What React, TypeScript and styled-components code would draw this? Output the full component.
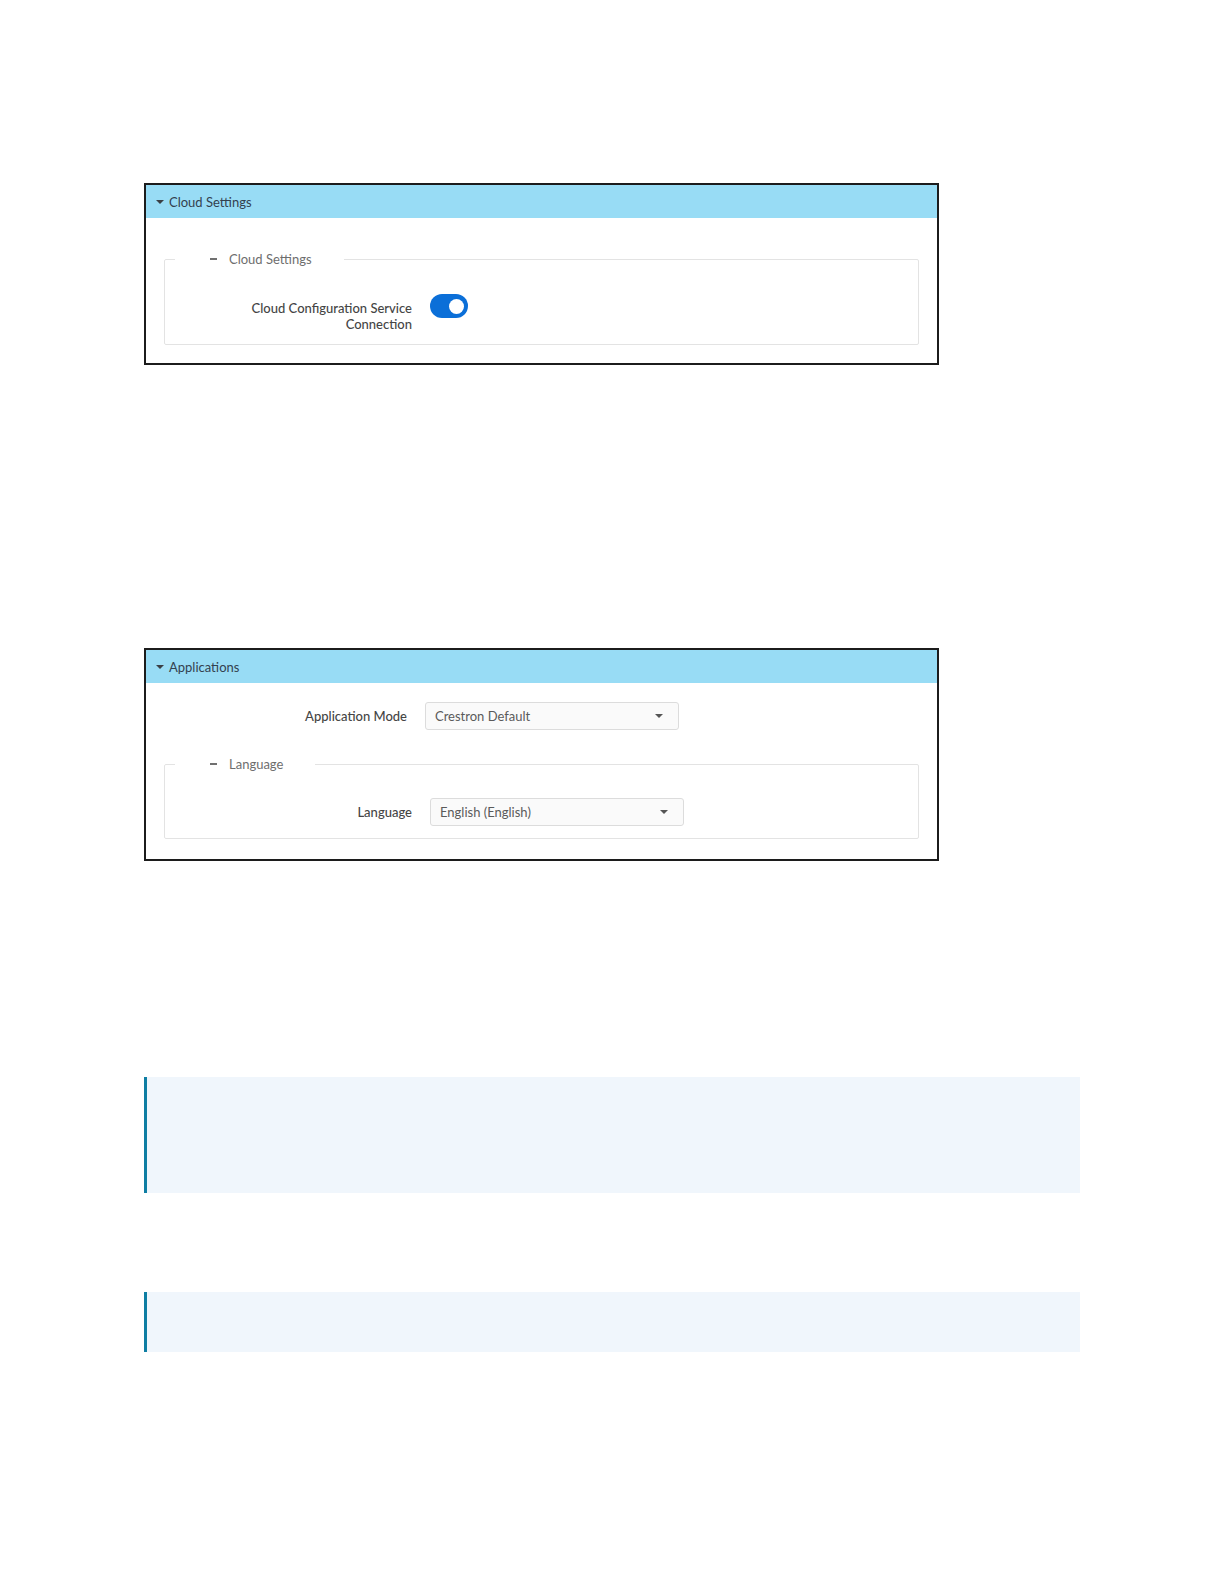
import React from "react";
import styled, { createGlobalStyle } from "styled-components";

const GlobalStyle = createGlobalStyle`
  html, body {
    margin: 0;
    padding: 0;
    background: #ffffff;
  }
  body {
    font-family: Lato, "Open Sans", "Liberation Sans", sans-serif;
    -webkit-font-smoothing: antialiased;
  }
  * { box-sizing: border-box; }
`;

const Page = styled.div`
  display: flex;
  flex-direction: column;
  align-items: flex-start;
  padding: 183px 0 0 144px;
  min-height: 1584px;
`;

const Panel = styled.section<{ $mt?: number }>`
  width: 795px;
  border: 2px solid #1c1c1c;
  background: #ffffff;
  margin-top: ${(p) => p.$mt ?? 0}px;
  display: flex;
  flex-direction: column;
`;

const PanelHeader = styled.div`
  height: 33px;
  background: #98dcf5;
  display: flex;
  align-items: center;
  padding-left: 10px;
  font-size: 13px;
  color: #33414f;
  gap: 5px;
`;

const Caret = styled.span`
  width: 0;
  height: 0;
  border-left: 4px solid transparent;
  border-right: 4px solid transparent;
  border-top: 4.5px solid #3a3f45;
`;

const PanelBody = styled.div<{ $pt: number; $pb: number }>`
  padding: ${(p) => p.$pt}px 0 ${(p) => p.$pb}px;
  display: flex;
  flex-direction: column;
`;

const Group = styled.fieldset<{ $mt?: number; $pt: number }>`
  margin: ${(p) => p.$mt ?? 0}px 18px 0 18px;
  padding: ${(p) => p.$pt}px 0 12px;
  border: 1px solid #e3e3e3;
  border-radius: 2px;
  min-width: 0;
`;

const Legend = styled.legend`
  margin-left: 10px;
  padding: 0 32px 0 35px;
  height: 16px;
  line-height: 16px;
  font-size: 13px;
  color: #6e6e6e;
  display: flex;
  align-items: center;
  gap: 12px;
`;

const Dash = styled.span`
  display: inline-block;
  width: 7px;
  height: 2px;
  background: #707070;
`;

const Row = styled.div<{ $align?: string }>`
  display: flex;
  align-items: ${(p) => p.$align ?? "center"};
  gap: 18px;
`;

const Label = styled.label<{ $w: number; $pt?: number }>`
  width: ${(p) => p.$w}px;
  flex: none;
  text-align: right;
  font-size: 13px;
  line-height: 16px;
  font-weight: 500;
  color: #454545;
  padding-top: ${(p) => p.$pt ?? 0}px;
`;

const Toggle = styled.span`
  width: 38px;
  height: 24px;
  border-radius: 12px;
  background: #0b6fd8;
  display: flex;
  align-items: center;
  justify-content: flex-end;
  padding-right: 4px;
  flex: none;
`;

const Knob = styled.span`
  width: 15px;
  height: 15px;
  border-radius: 50%;
  background: #ffffff;
`;

const Select = styled.div`
  width: 254px;
  height: 28px;
  border: 1px solid #dcdcdc;
  border-radius: 3px;
  background: #fafafa;
  display: flex;
  align-items: center;
  justify-content: space-between;
  padding: 0 15px 0 9px;
  font-size: 13px;
  font-weight: 400;
  color: #5a5a5a;
  flex: none;
`;

const SelectCaret = styled.span`
  width: 0;
  height: 0;
  border-left: 4px solid transparent;
  border-right: 4px solid transparent;
  border-top: 4px solid #555555;
`;

const Callout = styled.div<{ $mt: number; $h: number }>`
  width: 936px;
  height: ${(p) => p.$h}px;
  margin-top: ${(p) => p.$mt}px;
  background: #f0f6fc;
  border-left: 3px solid #0e7ea3;
`;

export default function App() {
  return (
    <>
      <GlobalStyle />
      <Page>
        <Panel>
          <PanelHeader>
            <Caret />
            Cloud Settings
          </PanelHeader>
          <PanelBody $pt={33} $pb={18}>
            <Group $pt={27}>
              <Legend>
                <Dash />
                Cloud Settings
              </Legend>
              <Row $align="flex-start">
                <Label $w={247} $pt={6}>
                  Cloud Configuration Service
                  <br />
                  Connection
                </Label>
                <Toggle>
                  <Knob />
                </Toggle>
              </Row>
            </Group>
          </PanelBody>
        </Panel>

        <Panel $mt={283}>
          <PanelHeader>
            <Caret />
            Applications
          </PanelHeader>
          <PanelBody $pt={19} $pb={20}>
            <Row>
              <Label $w={261}>Application Mode</Label>
              <Select>
                Crestron Default
                <SelectCaret />
              </Select>
            </Row>
            <Group $mt={26} $pt={26}>
              <Legend>
                <Dash />
                Language
              </Legend>
              <Row>
                <Label $w={247}>Language</Label>
                <Select>
                  English (English)
                  <SelectCaret />
                </Select>
              </Row>
            </Group>
          </PanelBody>
        </Panel>

        <Callout $mt={216} $h={116} />
        <Callout $mt={99} $h={60} />
      </Page>
    </>
  );
}
